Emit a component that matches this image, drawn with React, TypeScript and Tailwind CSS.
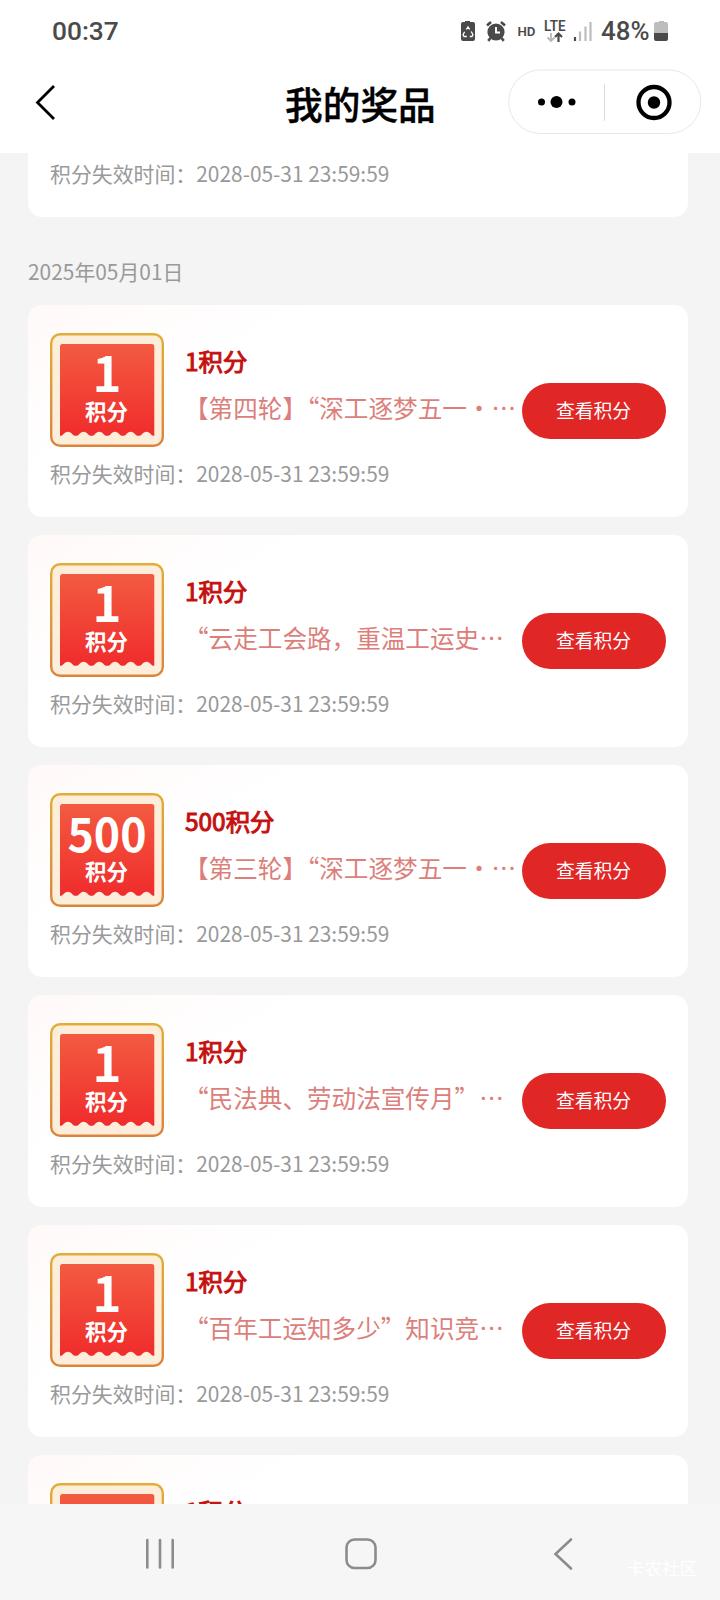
import React from "react";

type Prize = { points: string; desc: string };

const prizes: Prize[] = [
  { points: "1", desc: "【第四轮】“深工逐梦五一・…" },
  { points: "1", desc: "“云走工会路，重温工运史…" },
  { points: "500", desc: "【第三轮】“深工逐梦五一・…" },
  { points: "1", desc: "“民法典、劳动法宣传月”…" },
  { points: "1", desc: "“百年工运知多少”知识竞…" },
  { points: "1", desc: "“深工逐梦五一”…" },
];

const EXPIRES = "2028-05-31 23:59:59";

function Ticket({ points, id }: { points: string; id: string }) {
  const wide = points.length > 1;
  return (
    <svg width="114" height="114" viewBox="0 0 114 114" className="shrink-0">
      <defs>
        <linearGradient id={`${id}-edge`} x1="0" y1="0" x2="0" y2="1">
          <stop offset="0" stopColor="#e0ae38" />
          <stop offset="1" stopColor="#dc843c" />
        </linearGradient>
        <linearGradient id={`${id}-red`} x1="0" y1="0" x2="0" y2="1">
          <stop offset="0" stopColor="#f35b41" />
          <stop offset="1" stopColor="#f02c2c" />
        </linearGradient>
      </defs>
      <rect x="1.200" y="1.200" width="111.600" height="111.600" rx="9" fill="#fdeedb" stroke={`url(#${id}-edge)`} strokeWidth="2.400" />
      <path
        d="M10 13.500Q10 11 12.500 11H101.800Q104.300 11 104.300 13.500V102.800C100.500 102.800 100.500 98.700 96.400 98.700S92.600 102.800 88.600 102.800S84.800 98.700 80.700 98.700S76.900 102.800 72.900 102.800S69.100 98.700 65 98.700S61.200 102.800 57.200 102.800S53.400 98.700 49.300 98.700S45.500 102.800 41.500 102.800S37.700 98.700 33.600 98.700S29.800 102.800 25.800 102.800S22 98.700 17.900 98.700S13.800 102.800 10 102.800Z"
        fill={`url(#${id}-red)`}
      />
      <text
        x="57"
        y={wide ? 59.3 : 58.8}
        textAnchor="middle"
        fontSize={wide ? 46 : 49}
        textLength={wide ? 79 : undefined}
        lengthAdjust="spacingAndGlyphs"
        fill="#fff"
        className="font-['Noto_Sans_CJK_SC',sans-serif] font-bold"
      >
        {points}
      </text>
      <text x="56.500" y="87" textAnchor="middle" fontSize="21.500" fill="#fff" className="font-['Noto_Sans_CJK_SC',sans-serif] font-bold">
        积分
      </text>
    </svg>
  );
}

function Expiry() {
  return (
    <p className="flex h-[30px] items-center whitespace-nowrap text-[20.9px] leading-[30px] text-[#999]">
      <span>积分失效时间：</span>
      <span>{EXPIRES}</span>
    </p>
  );
}

function PrizeCard({ prize, id }: { prize: Prize; id: string }) {
  return (
    <article className="h-[212px] shrink-0 rounded-[14px] bg-[linear-gradient(150deg,#fff9f8_0%,#ffffff_28%)] px-[22px] pt-7">
      <div className="flex h-[114px]">
        <Ticket points={prize.points} id={id} />
        <div className="flex w-[337px] shrink-0 flex-col pl-5 pt-[10px]">
          <h2 className="h-9 whitespace-nowrap pl-px text-[24.4px] font-normal leading-9 text-[#c51010] [-webkit-text-stroke:1px_#c51010]">
            {prize.points}积分
          </h2>
          <p className="mt-[10px] h-9 whitespace-nowrap text-[24.6px] leading-9 text-[#dc7f7b]">{prize.desc}</p>
        </div>
        <button className="ml-[21px] mt-[50px] h-14 w-36 shrink-0 rounded-full bg-[#e12626] pb-px pr-px text-[18.8px] leading-none text-white">
          查看积分
        </button>
      </div>
      <div className="mt-[11px]">
        <Expiry />
      </div>
    </article>
  );
}

function StatusBar() {
  return (
    <div className="flex h-[62px] items-center justify-between pl-[52px] pr-[49px] font-[Roboto,sans-serif] text-[#4a4a4a]">
      <span className="text-[26.3px] font-medium leading-none">00:37</span>
      <svg width="211" height="40" viewBox="0 0 211 40" fill="none">
        <path d="M5 11V10h5V11h3q2 0 2 2v15q0 2-2 2H3q-2 0-2-2V13q0-2 2-2z" fill="#4a4a4a" />
        <path d="M6.300 18.500L8 16l1.700 2.500M11.200 20.500l1.800 3.200-1 1.800H9.800M6.800 25.500H4l-1-1.800 1.600-3" stroke="#fff" strokeWidth="1.300" />
        <circle cx="36" cy="21" r="8.600" fill="#4a4a4a" />
        <path d="M36 16v5.500h4" stroke="#fff" strokeWidth="1.900" />
        <path d="M27 14.500l4-3.500M45 14.500L41 11M30.500 27l-2.300 2.800M41.500 27l2.300 2.800" stroke="#4a4a4a" strokeWidth="2.600" />
        <text x="57.500" y="24.500" fontSize="13.500" textLength="18" lengthAdjust="spacingAndGlyphs" fill="#4a4a4a" className="font-semibold">HD</text>
        <text x="84" y="20" fontSize="14.500" textLength="21.500" lengthAdjust="spacingAndGlyphs" fill="#4a4a4a" className="font-semibold">LTE</text>
        <path d="M91 22v8M87.500 26.500L91 30l3.500-3.500" stroke="#b8b8b8" strokeWidth="1.800" />
        <path d="M98.500 31v-8M95 26l3.500-3.500L102 26" stroke="#4a4a4a" strokeWidth="2.200" />
        <path d="M115 26v4" stroke="#4a4a4a" strokeWidth="2.200" />
        <path d="M120 20.500v9.500M125.500 15.500v14.500M130.500 11v19" stroke="#bdbdbd" strokeWidth="2.200" />
        <text x="141" y="29.300" fontSize="26" textLength="48.500" lengthAdjust="spacingAndGlyphs" fill="#4a4a4a" className="font-medium">48%</text>
        <path d="M199 11V10h5V11h2q2 0 2 2v9h-14v-9q0-2 2-2z" fill="#bdbdbd" />
        <path d="M194 22h14v6q0 2-2 2h-10q-2 0-2-2z" fill="#4a4a4a" />
      </svg>
    </div>
  );
}

function TitleBar() {
  return (
    <div className="flex h-[91px] items-start">
      <svg width="30" height="40" viewBox="0 0 30 40" className="ml-[30px] mt-5 shrink-0" fill="none">
        <path d="M24 4L7.500 20.500 24 37" stroke="#000" strokeWidth="2.800" />
      </svg>
      <h1 className="ml-[225px] mt-4 w-[151px] whitespace-nowrap text-[37.7px] font-medium leading-[50px] text-black [-webkit-text-stroke:0.4px_#000]">
        我的奖品
      </h1>
      <svg width="194" height="66" viewBox="0 0 194 66" className="ml-[72px] mt-[7px] shrink-0">
        <rect x="0.700" y="1" width="192" height="63.500" rx="31.750" fill="#fff" stroke="#e8e8e8" />
        <circle cx="33.500" cy="33" r="3.500" />
        <circle cx="48.500" cy="33" r="6" />
        <circle cx="64" cy="33" r="3.500" />
        <path d="M96.500 14.500V52" stroke="#dcdcdc" />
        <circle cx="146" cy="33.500" r="15.500" fill="none" stroke="#000" strokeWidth="4.300" />
        <circle cx="146" cy="33.500" r="6.200" />
      </svg>
    </div>
  );
}

function NavBar() {
  return (
    <footer className="relative h-24 shrink-0 bg-[#f6f6f6]">
      <svg width="720" height="96" viewBox="0 0 720 96" fill="none" stroke="#8c8c8c" strokeWidth="2.600" strokeLinecap="round">
        <path d="M147.300 36v27.500M160 36v27.500M172.700 36v27.500" />
        <rect x="346.500" y="35.500" width="29" height="28.500" rx="8" />
        <path d="M571 35.500L555.500 50 571 64.500" />
      </svg>
      <span className="absolute right-[23px] top-[50px] text-[17.5px] leading-[28px] text-white">卡农社区</span>
    </footer>
  );
}

export default function App() {
  return (
    <div lang="zh-CN" className="flex h-[1600px] w-[720px] flex-col overflow-hidden bg-[#f4f4f4] font-['Noto_Sans_CJK_SC',sans-serif]">
      <header className="h-[153px] shrink-0 bg-white">
        <StatusBar />
        <TitleBar />
      </header>
      <main className="flex min-h-0 flex-1 flex-col overflow-hidden pl-7 pr-8">
        <div className="h-16 shrink-0 rounded-b-[14px] bg-white px-[22px] pt-[5px]">
          <Expiry />
        </div>
        <p className="mt-[38px] h-8 shrink-0 text-[20.9px] leading-8 text-[#999]">2025年05月01日</p>
        <section className="mt-[18px] flex flex-col gap-[18px]">
          {prizes.map((p, i) => (
            <PrizeCard key={i} prize={p} id={`ticket-${i}`} />
          ))}
        </section>
      </main>
      <NavBar />
    </div>
  );
}
